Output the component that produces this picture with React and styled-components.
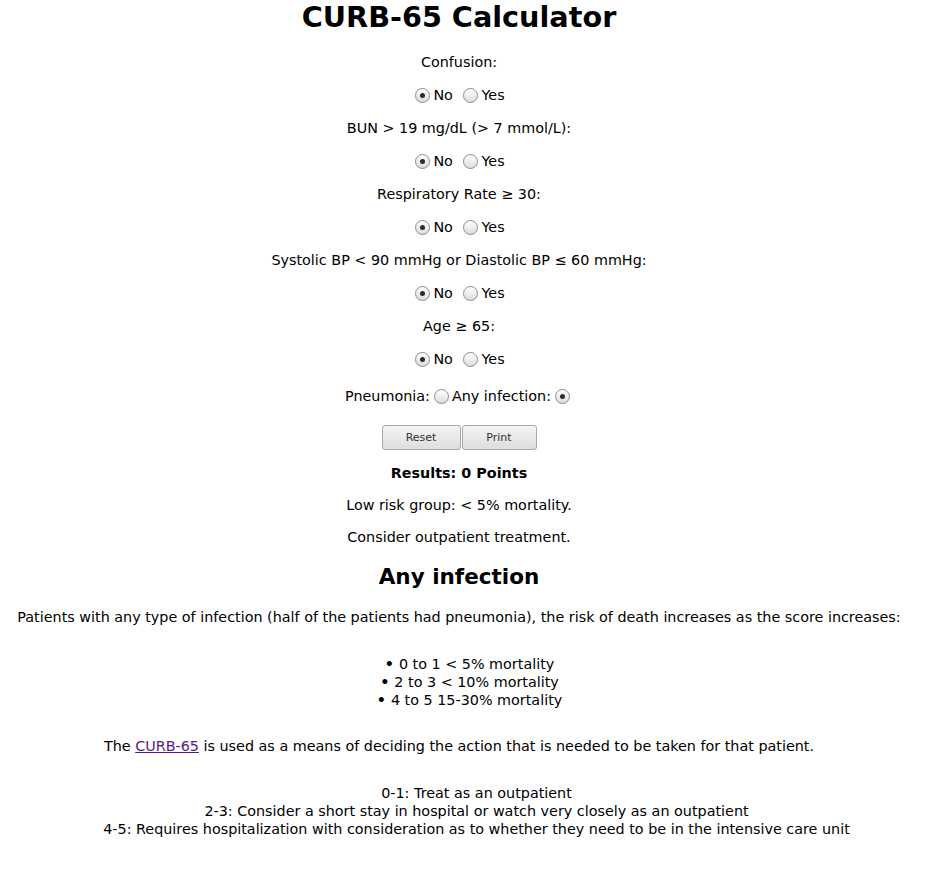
import styled, { createGlobalStyle } from "styled-components";
import { useState } from "react";

const GlobalStyle = createGlobalStyle`
  body {
    margin: 0;
    background: #fff;
    color: #000;
    font-family: "DejaVu Sans", "Liberation Sans", sans-serif;
    font-size: 14.35px;
  }
`;

const Page = styled.div`
  padding: 0 17px 0 8px;
  text-align: center;
`;

const Title = styled.h1`
  font-size: 28.7px;
  line-height: 34px;
  margin: 0 0 19px;
  font-weight: bold;
`;

const Line = styled.p`
  margin: ${(p) => p.$gap || 14}px 0;
  line-height: ${(p) => p.$lh || 19}px;
`;

const Radio = styled.input.attrs({ type: "radio" })`
  appearance: none;
  width: 15px;
  height: 15px;
  margin: 0 3px 0 4px;
  vertical-align: -3px;
  border: 1px solid #8c8c8c;
  border-radius: 50%;
  background: linear-gradient(#ffffff, #dcdcdc);
  position: relative;

  &:checked::after {
    content: "";
    position: absolute;
    left: 4px;
    top: 4px;
    width: 5px;
    height: 5px;
    border-radius: 50%;
    background: #2b2b2b;
  }
`;

const Choice = styled.label`
  cursor: pointer;
  margin-right: 2px;
`;

const ButtonRow = styled.div`
  display: flex;
  justify-content: center;
  gap: 1px;
  margin: 19px 0 14px;
`;

const Button = styled.button`
  width: ${(p) => p.$w}px;
  height: 25px;
  font-family: inherit;
  font-size: 11px;
  color: #333;
  border: 1px solid #a9a9a9;
  border-radius: 3px;
  background: linear-gradient(#f4f4f4, #dedede);
`;

const Result = styled(Line)`
  font-weight: bold;
`;

const SubTitle = styled.h2`
  font-size: 21.5px;
  line-height: 26px;
  margin: 18px 0;
`;

const Bullets = styled.ul`
  list-style: none;
  padding: 0 0 0 21px;
  margin: 29px 0 28px;
  line-height: 18px;

  li::before {
    content: "• ";
    font-weight: bold;
  }
`;

const Plain = styled.div`
  margin: 29px 0 28px;
  padding-left: 35px;
  line-height: 18px;
`;

const Link = styled.a`
  color: #551a8b;
`;

const questions = [
  "Confusion:",
  "BUN > 19 mg/dL (> 7 mmol/L):",
  "Respiratory Rate ≥ 30:",
  "Systolic BP < 90 mmHg or Diastolic BP ≤ 60 mmHg:",
  "Age ≥ 65:",
];

export default function App() {
  const [answers, setAnswers] = useState(questions.map(() => false));
  const [mode, setMode] = useState("any");
  const score = answers.filter(Boolean).length;

  const set = (i, v) => setAnswers((a) => a.map((x, j) => (j === i ? v : x)));

  return (
    <Page>
      <GlobalStyle />
      <Title>CURB-65 Calculator</Title>
      {questions.map((q, i) => (
        <div key={q}>
          <Line>{q}</Line>
          <Line>
            <Choice>
              <Radio name={`q${i}`} checked={!answers[i]} onChange={() => set(i, false)} />
              No
            </Choice>{" "}
            <Choice>
              <Radio name={`q${i}`} checked={answers[i]} onChange={() => set(i, true)} />
              Yes
            </Choice>
          </Line>
        </div>
      ))}
      <Line $gap={18}>
        Pneumonia:
        <Radio name="mode" checked={mode === "pn"} onChange={() => setMode("pn")} />
        Any infection:
        <Radio name="mode" checked={mode === "any"} onChange={() => setMode("any")} />
      </Line>
      <ButtonRow>
        <Button $w={79} onClick={() => setAnswers(questions.map(() => false))}>
          Reset
        </Button>
        <Button $w={75}>Print</Button>
      </ButtonRow>
      <Result $lh={18}>Results: {score} Points</Result>
      <Line $lh={18}>Low risk group: &lt; 5% mortality.</Line>
      <Line $lh={18}>Consider outpatient treatment.</Line>
      <SubTitle>Any infection</SubTitle>
      <Line $lh={18}>
        Patients with any type of infection (half of the patients had pneumonia), the risk of
        death increases as the score increases:
      </Line>
      <Bullets>
        <li>0 to 1 &lt; 5% mortality</li>
        <li>2 to 3 &lt; 10% mortality</li>
        <li>4 to 5 15-30% mortality</li>
      </Bullets>
      <Line $lh={18}>
        The <Link href="#">CURB-65</Link> is used as a means of deciding the action that is
        needed to be taken for that patient.
      </Line>
      <Plain>
        0-1: Treat as an outpatient
        <br />
        2-3: Consider a short stay in hospital or watch very closely as an outpatient
        <br />
        4-5: Requires hospitalization with consideration as to whether they need to be in the
        intensive care unit
      </Plain>
    </Page>
  );
}
